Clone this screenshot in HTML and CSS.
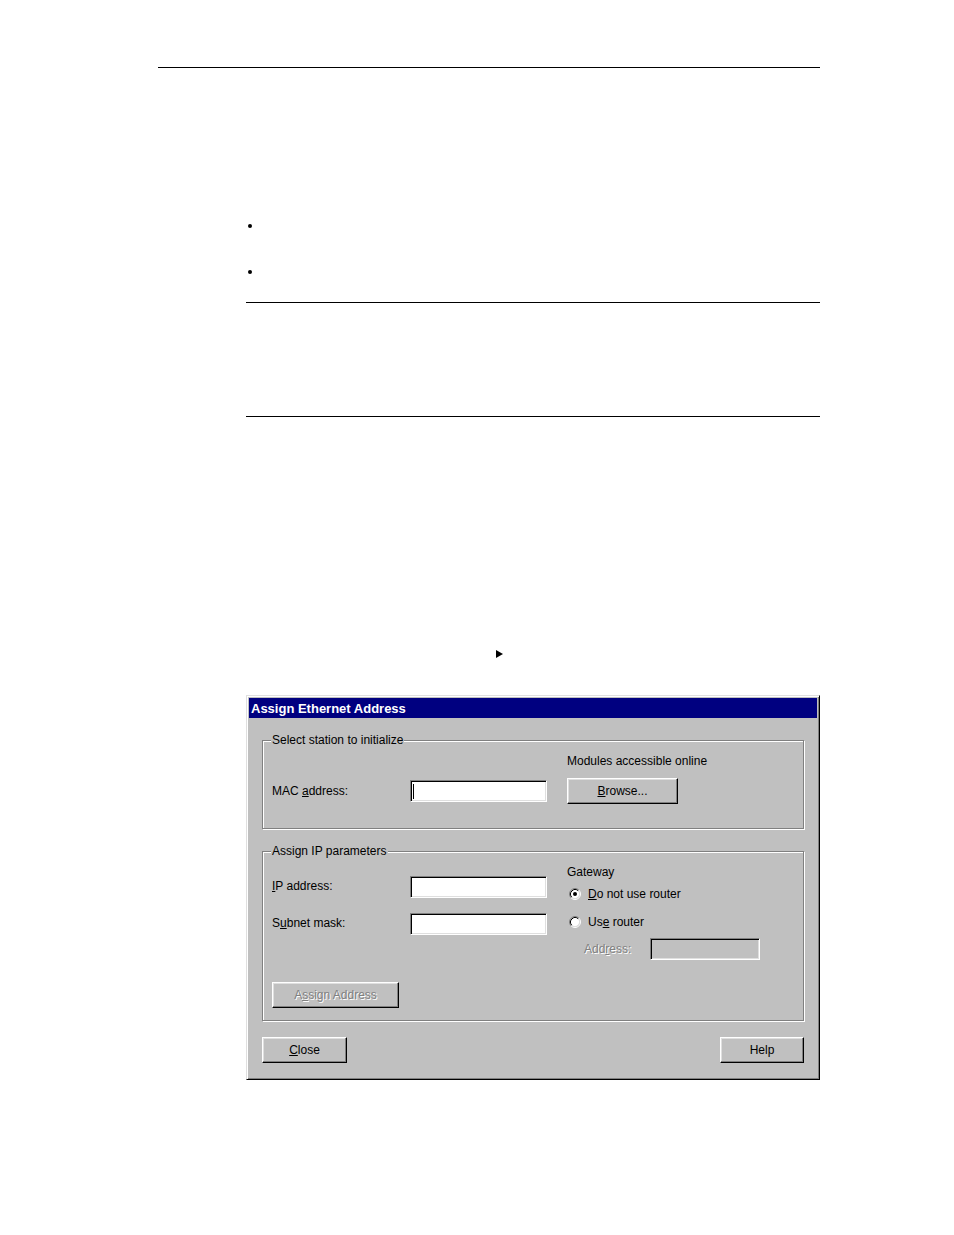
FILE: index.html
```html
<!DOCTYPE html>
<html>
<head>
<meta charset="utf-8">
<title>Assign Ethernet Address</title>
<link rel="stylesheet" href="styles.css">
</head>
<body>
<div class="page">
  <div class="top-rule"></div>
  <div class="content">
    <div class="bullet first"></div>
    <div class="bullet second"></div>
    <div class="rule rule-a"></div>
    <div class="rule rule-b"></div>
    <svg class="arrow" width="7" height="8" viewBox="0 0 7 8"><polygon points="0,0 7,4 0,8" fill="#000"/></svg>

    <div class="dialog">
      <div class="titlebar">Assign Ethernet Address</div>
      <div class="dlg-body">
        <fieldset class="group group-1">
          <legend>Select station to initialize</legend>
          <div class="g1-caption">Modules accessible online</div>
          <div class="g1-row">
            <span class="label">MAC <u>a</u>ddress:</span>
            <div class="field"><span class="caret"></span></div>
            <div class="btn browse"><span><u>B</u>rowse...</span></div>
          </div>
        </fieldset>

        <fieldset class="group group-2">
          <legend>Assign IP parameters</legend>
          <div class="g2-cols">
            <div class="g2-left">
              <div class="g2-row ip-row">
                <span class="label"><u>I</u>P address:</span>
                <div class="field"></div>
              </div>
              <div class="g2-row mask-row">
                <span class="label">S<u>u</u>bnet mask:</span>
                <div class="field"></div>
              </div>
              <div class="btn assign disabled"><span>A<u>s</u>sign Address</span></div>
            </div>
            <div class="g2-right">
              <div class="gw-caption">Gateway</div>
              <div class="radio-row r1">
                <svg class="radio" width="12" height="12" viewBox="0 0 12 12">
                  <circle cx="6" cy="6" r="4.5" fill="#fff"/>
                  <path d="M2.11 9.89 A5.5 5.5 0 0 1 9.89 2.11" fill="none" stroke="#808080"/>
                  <path d="M9.89 2.11 A5.5 5.5 0 0 1 2.11 9.89" fill="none" stroke="#fff"/>
                  <path d="M2.82 9.18 A4.5 4.5 0 0 1 9.18 2.82" fill="none" stroke="#000"/>
                  <path d="M9.18 2.82 A4.5 4.5 0 0 1 2.82 9.18" fill="none" stroke="#dfdfdf"/>
                  <circle cx="6" cy="6" r="2" fill="#000"/>
                </svg>
                <span><u>D</u>o not use router</span>
              </div>
              <div class="radio-row r2">
                <svg class="radio" width="12" height="12" viewBox="0 0 12 12">
                  <circle cx="6" cy="6" r="4.5" fill="#fff"/>
                  <path d="M2.11 9.89 A5.5 5.5 0 0 1 9.89 2.11" fill="none" stroke="#808080"/>
                  <path d="M9.89 2.11 A5.5 5.5 0 0 1 2.11 9.89" fill="none" stroke="#fff"/>
                  <path d="M2.82 9.18 A4.5 4.5 0 0 1 9.18 2.82" fill="none" stroke="#000"/>
                  <path d="M9.18 2.82 A4.5 4.5 0 0 1 2.82 9.18" fill="none" stroke="#dfdfdf"/>
                </svg>
                <span>Us<u>e</u> router</span>
              </div>
              <div class="addr-row">
                <span class="addr-label disabled-text">Add<u>r</u>ess:</span>
                <div class="field field-disabled"></div>
              </div>
            </div>
          </div>
        </fieldset>

        <div class="dlg-buttons">
          <div class="btn close"><span><u>C</u>lose</span></div>
          <div class="btn help"><span>Help</span></div>
        </div>
      </div>
    </div>
  </div>
</div>
</body>
</html>
```
FILE: styles.css
```css
html, body {
  margin: 0;
  padding: 0;
  background: #fff;
}
body {
  font-family: "Liberation Sans", Arial, sans-serif;
  font-size: 12px;
  color: #000;
}
.page {
  padding-top: 67px;
  padding-left: 158px;
  width: 662px;
  padding-bottom: 155px;
}
.top-rule {
  height: 1px;
  background: #000;
}
.content {
  margin-left: 88px;
  width: 574px;
}
.bullet {
  width: 4px;
  height: 4px;
  border-radius: 50%;
  background: #000;
  margin-left: 2px;
}
.bullet.first { margin-top: 156px; }
.bullet.second { margin-top: 42px; }
.rule {
  height: 1px;
  background: #000;
}
.rule-a { margin-top: 28px; }
.rule-b { margin-top: 113px; }
.arrow {
  display: block;
  margin-top: 233px;
  margin-left: 250px;
}

/* Dialog */
.dialog {
  margin-top: 37px;
  background: #c0c0c0;
  border: 1px solid;
  border-color: #dfdfdf #000 #000 #dfdfdf;
  box-shadow: inset 1px 1px 0 #fff, inset -1px -1px 0 #808080;
  padding: 2px;
}
.titlebar {
  height: 19px;
  padding-top: 1px;
  line-height: 19px;
  background: #000080;
  color: #fff;
  font-weight: bold;
  font-size: 13px;
  padding-left: 2px;
}
.dlg-body {
  padding: 15px 13px 14px;
}
.group {
  margin: 0;
  border: 1px solid #808080;
  box-shadow: inset 1px 1px 0 #fff, 1px 1px 0 #fff;
  padding: 0 9px;
  min-width: 0;
}
.group legend {
  padding: 1px 1px 0;
  margin-left: -1px;
  line-height: 13px;
  background: #c0c0c0;
}
.group-1 { padding-top: 6px; padding-bottom: 24px; }
.group-2 { margin-top: 15px; padding-bottom: 12px; }

.g1-caption {
  line-height: 14px;
  padding-left: 295px;
  padding-top: 1px;
}
.g1-row {
  display: flex;
  align-items: center;
  margin-top: 10px;
  height: 26px;
}
.label {
  width: 138px;
  flex: none;
  line-height: 14px;
}
.g2-row .label {
  margin-top: -3px;
}
.field {
  width: 137px;
  height: 22px;
  box-sizing: border-box;
  background: #fff;
  border: 1px solid;
  border-color: #808080 #fff #fff #808080;
  box-shadow: inset 1px 1px 0 #000, inset -1px -1px 0 #dfdfdf;
  position: relative;
  flex: none;
}
.caret {
  position: absolute;
  left: 2px;
  top: 3px;
  width: 1px;
  height: 15px;
  background: #000;
}
.field-disabled {
  background: #c0c0c0;
  width: 110px;
  height: 22px;
}
.btn {
  box-sizing: border-box;
  height: 26px;
  border: 1px solid;
  border-color: #fff #000 #000 #fff;
  box-shadow: inset -1px -1px 0 #808080, inset 1px 1px 0 #dfdfdf;
  background: #c0c0c0;
  display: flex;
  align-items: center;
  justify-content: center;
  line-height: 14px;
  flex: none;
}
.browse {
  width: 111px;
  margin-left: 20px;
}
.disabled span, .disabled-text {
  color: #808080;
  text-shadow: 1px 1px 0 #fff;
}

.g2-cols {
  display: flex;
}
.g2-left {
  width: 275px;
  flex: none;
}
.g2-row {
  display: flex;
  align-items: center;
  height: 22px;
}
.ip-row { margin-top: 18px; }
.mask-row { margin-top: 15px; }
.assign {
  width: 127px;
  margin-top: 47px;
}
.g2-right {
  margin-left: 20px;
  flex: 1;
}
.gw-caption {
  line-height: 14px;
  margin-top: 7px;
}
.radio-row {
  display: flex;
  align-items: center;
  height: 14px;
  line-height: 14px;
}
.radio {
  display: block;
  margin-left: 2px;
  margin-right: 7px;
  flex: none;
}
.r1 { margin-top: 8px; }
.r2 { margin-top: 14px; }
.addr-row {
  display: flex;
  align-items: center;
  margin-top: 9px;
  height: 22px;
}
.addr-label {
  margin-left: 17px;
  width: 66px;
}
.dlg-buttons {
  display: flex;
  justify-content: space-between;
  margin-top: 16px;
}
.close { width: 85px; }
.help { width: 84px; }
```
